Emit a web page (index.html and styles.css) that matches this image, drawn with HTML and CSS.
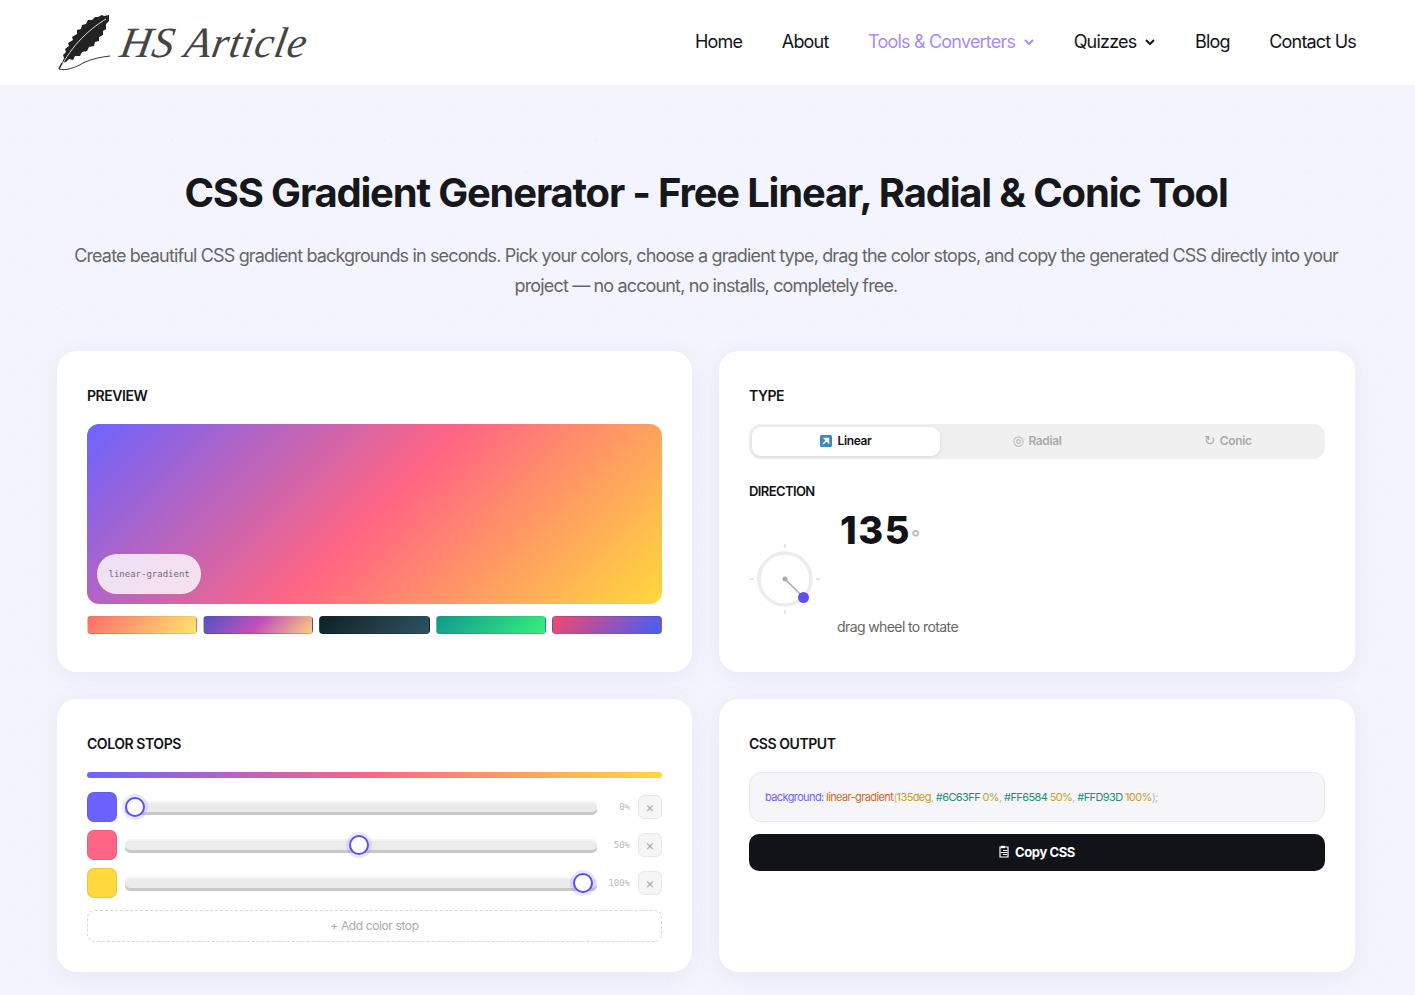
FILE: index.html
```html
<!DOCTYPE html>
<html lang="en">

<head>
  <meta charset="UTF-8">
  <meta name="viewport" content="width=device-width, initial-scale=1">
  <title>CSS Gradient Generator - Free Linear, Radial &amp; Conic Tool</title>
  <link rel="stylesheet" href="styles.css">
</head>

<body>
<header class="site-header">
  <a class="logo" href="#">
    <svg class="logo-mark" width="56" height="60" viewBox="0 0 56 60">
      <path d="M52 2 L47 3 L45 2 L41 4 L38 4 L35 7 L31 7 L29 11 L25 12 L24 16 L20 17 L20 21 L15 24 L16 27 L11 30 L12 33 L8 36 L9 39 L6 42 L7 45 L5 50 L9 49 L12 46 L16 47 L18 43 L23 43 L25 39 L30 38 L32 34 L37 33 L38 29 L42 28 L42 24 L46 22 L46 18 L49 16 L49 11 L52 8 Z" fill="#222"/>
      <path d="M49 6 C36 14 18 28 5 52" fill="none" stroke="#ddd" stroke-width="1"/>
      <path d="M5 50 L2 56" fill="none" stroke="#222" stroke-width="1.6"/>
      <path d="M2 56 C8 58 18 55 26 50 C34 46 44 44 53 43" fill="none" stroke="#333" stroke-width="1"/>
    </svg>
    <span class="logo-text">HS Article</span>
  </a>
  <nav class="main-nav">
    <a href="#">Home</a>
    <a href="#">About</a>
    <a href="#" class="current">Tools &amp; Converters
      <svg class="chevron" width="10" height="6" viewBox="0 0 10 6"><path d="M1 1l4 4 4-4" fill="none" stroke="currentColor" stroke-width="2"/></svg>
    </a>
    <a href="#">Quizzes
      <svg class="chevron" width="10" height="6" viewBox="0 0 10 6"><path d="M1 1l4 4 4-4" fill="none" stroke="currentColor" stroke-width="2"/></svg>
    </a>
    <a href="#">Blog</a>
    <a href="#">Contact Us</a>
  </nav>
</header>

<main class="page">
  <section class="intro">
    <h1>CSS Gradient Generator - Free Linear, Radial &amp; Conic Tool</h1>
    <p>Create beautiful CSS gradient backgrounds in seconds. Pick your colors, choose a gradient type, drag the color stops, and copy the generated CSS directly into your project — no account, no installs, completely free.</p>
  </section>

  <div class="tool-grid">
    <section class="card">
      <h2 class="card-label">PREVIEW</h2>
      <div class="preview">
        <span class="preview-pill">linear-gradient</span>
      </div>
      <div class="presets">
        <span class="preset preset-1"></span>
        <span class="preset preset-2"></span>
        <span class="preset preset-3"></span>
        <span class="preset preset-4"></span>
        <span class="preset preset-5"></span>
      </div>
    </section>

    <section class="card">
      <h2 class="card-label">TYPE</h2>
      <div class="tabs">
        <button class="tab active">
          <svg width="12" height="12" viewBox="0 0 12 12"><rect width="12" height="12" rx="1.5" fill="#3b88c3"/><path d="M3 9l4-4M4.5 3.5H8.5V7.5z" stroke="#fff" stroke-width="1.4" fill="#fff"/></svg>
          Linear
        </button>
        <button class="tab"><span class="tab-glyph">◎</span> Radial</button>
        <button class="tab"><span class="tab-glyph">↻</span> Conic</button>
      </div>
      <h2 class="card-label direction-label">DIRECTION</h2>
      <div class="direction">
        <svg class="dial" width="72" height="72" viewBox="0 0 72 72">
          <circle cx="36" cy="36" r="26" fill="#fff" stroke="#ececec" stroke-width="3.500"/>
          <g stroke="#ddd" stroke-width="1.500">
            <path d="M36 1v4M36 67v4M1 36h4M67 36h4"/>
          </g>
          <g stroke="#eee" stroke-width="1">
            <path d="M11 11l1 1M60 11l1 1M11 61l1-1M60 60l1 1"/>
          </g>
          <line x1="36" y1="36" x2="54" y2="54" stroke="#aaa" stroke-width="1.500"/>
          <circle cx="36" cy="36" r="2.500" fill="#aaa"/>
          <circle cx="54.500" cy="54.500" r="5.500" fill="#5b50f5"/>
        </svg>
        <div class="direction-info">
          <div class="angle">135<span class="degree">°</span></div>
          <p class="hint">drag wheel to rotate</p>
        </div>
      </div>
    </section>

    <section class="card">
      <h2 class="card-label">COLOR STOPS</h2>
      <div class="stops-bar"></div>
      <div class="stop-list">
        <div class="stop">
          <span class="stop-color color-a"></span>
          <input class="stop-range" type="range" min="0" max="100" value="0">
          <span class="stop-pct">0%</span>
          <button class="stop-remove">×</button>
        </div>
        <div class="stop">
          <span class="stop-color color-b"></span>
          <input class="stop-range" type="range" min="0" max="100" value="50">
          <span class="stop-pct">50%</span>
          <button class="stop-remove">×</button>
        </div>
        <div class="stop">
          <span class="stop-color color-c"></span>
          <input class="stop-range" type="range" min="0" max="100" value="100">
          <span class="stop-pct">100%</span>
          <button class="stop-remove">×</button>
        </div>
      </div>
      <button class="add-stop">+ Add color stop</button>
    </section>

    <section class="card">
      <h2 class="card-label">CSS OUTPUT</h2>
      <div class="css-output"><span class="c-prop">background:</span> <span class="c-fn">linear-gradient</span><span class="c-punc">(</span><span class="c-num">135deg</span><span class="c-punc">,</span> <span class="c-hex">#6C63FF</span> <span class="c-num">0%</span><span class="c-punc">,</span> <span class="c-hex">#FF6584</span> <span class="c-num">50%</span><span class="c-punc">,</span> <span class="c-hex">#FFD93D</span> <span class="c-num">100%</span><span class="c-punc">);</span></div>
      <button class="copy-btn">
        <svg width="10" height="13" viewBox="0 0 10 13"><path d="M1 2h8v10H1z" fill="none" stroke="#fff" stroke-width="1.200"/><path d="M2 .8h4v2.400H2z" fill="#fff"/><path d="M4 5.500h4M2 7.500h6M4 9.500h4" stroke="#fff" stroke-width="1"/></svg>
        Copy CSS
      </button>
    </section>
  </div>
</main>
</body>

</html>
```

FILE: styles.css
```css
* {
    box-sizing: border-box;
}

body {
    margin: 0;
    background-color: #f4f4fe;
    /* faint speckle over the page */
    background-image:
        radial-gradient(circle at 13px 21px, #eeeff9 0.6px, transparent 1.1px),
        radial-gradient(circle at 21px 7px, #eff0fa 0.6px, transparent 1.1px),
        radial-gradient(circle at 29px 17px, #eeeff9 0.6px, transparent 1.1px),
        radial-gradient(circle at 5px 37px, #eff0fa 0.6px, transparent 1.1px);
    background-size: 53px 59px, 37px 43px, 71px 31px, 29px 67px;
    color: #111318;
    font-family: Inter, "Liberation Sans", sans-serif;
}

a {
    color: inherit;
    text-decoration: none;
}

button {
    font-family: inherit;
    cursor: pointer;
}

/* header */
.site-header {
    display: flex;
    align-items: center;
    justify-content: space-between;
    height: 85px;
    padding: 0 59px 0 57px;
    background-color: #fff;
}

.logo {
    display: flex;
    align-items: center;
    gap: 8px;
}

.logo-text {
    font-family: "Liberation Serif", serif;
    font-style: italic;
    font-size: 43px;
    letter-spacing: 0.7px;
    color: #444;
    white-space: nowrap;
    transform: skewX(-10deg);
}

.main-nav {
    display: flex;
    align-items: center;
    gap: 39.500px;
    padding-bottom: 2px;
    font-size: 18px;
    letter-spacing: -0.8px;
}

.main-nav a {
    display: flex;
    align-items: center;
    gap: 9px;
}

.main-nav .current {
    color: #a78bfa;
}

/* intro */
.page {
    padding: 0 60px 23px 57px;
}

.intro {
    padding-top: 83px;
    text-align: center;
}

.intro h1 {
    margin: 0;
    font-size: 40px;
    line-height: 50px;
    font-weight: 700;
    letter-spacing: -1.2px;
    color: #16171b;
}

.intro p {
    margin: 23px 0 50px;
    font-size: 18px;
    line-height: 30px;
    letter-spacing: -0.85px;
    color: #666;
}

/* cards */
.tool-grid {
    display: grid;
    grid-template-columns: 635px 636px;
    grid-template-rows: 321px 273px;
    gap: 27px;
}

.card {
    padding: 36px 30px 0;
    background-color: #fff;
    border-radius: 20px;
    box-shadow: 0 4px 24px rgba(90, 90, 150, 0.08);
}

.card-label {
    margin: 0 0 20px;
    font-size: 14px;
    line-height: 17px;
    font-weight: 600;
    letter-spacing: -0.45px;
}

/* preview */
.preview {
    position: relative;
    height: 180px;
    border-radius: 12px;
    background: linear-gradient(135deg, #6c63ff 0%, #ff6584 50%, #ffd93d 100%);
}

.preview-pill {
    position: absolute;
    left: 10px;
    bottom: 10px;
    padding: 0 10.500px;
    height: 40px;
    line-height: 38px;
    border: 1px solid rgba(255, 255, 255, 0.2);
    border-radius: 20px;
    background-color: rgba(255, 255, 255, 0.8);
    font-family: "DejaVu Sans Mono", monospace;
    font-size: 9px;
    color: #6e6e7e;
}

.presets {
    display: flex;
    gap: 6px;
    margin-top: 12px;
}

.preset {
    flex: 1;
    height: 18px;
    border: 1px solid rgba(0, 0, 0, 0.08);
    border-radius: 4px;
}

.preset-1 { background: linear-gradient(135deg, #ff6b6b, #ffe66d); }
.preset-2 { background: linear-gradient(135deg, #4e54c8, #c44fbb 50%, #fbd07c); }
.preset-3 { background: linear-gradient(135deg, #0f2027, #203a43, #2c5364); }
.preset-4 { background: linear-gradient(135deg, #11998e, #38ef7d); }
.preset-5 { background: linear-gradient(135deg, #f5476b, #4060f8); }

/* type tabs */
.tabs {
    display: flex;
    gap: 3px;
    height: 35px;
    padding: 3px;
    border-radius: 12px;
    background-color: #f0f0f0;
}

.tab {
    flex: 1;
    display: flex;
    align-items: center;
    justify-content: center;
    gap: 5px;
    padding: 0 0 2px;
    border: 0;
    border-radius: 9px;
    background: none;
    font-size: 12px;
    font-weight: 600;
    letter-spacing: -0.35px;
    color: #aaa;
}

.tab svg {
    margin-top: 1px;
}

.tab.active {
    background-color: #fff;
    color: #111318;
    box-shadow: 0 1px 4px rgba(0, 0, 0, 0.1);
}

.tab-glyph {
    font-size: 13px;
    font-weight: 400;
    font-family: "DejaVu Sans", sans-serif;
}

.direction-label {
    margin: 24px 0 5px;
    font-size: 13px;
    letter-spacing: -0.6px;
}

.direction {
    display: flex;
    align-items: center;
    gap: 16px;
}

.dial {
    flex: none;
    margin-top: 18px;
}

.direction-info {
    display: flex;
    flex-direction: column;
    justify-content: space-between;
    height: 130px;
}

.angle {
    display: flex;
    align-items: center;
    padding-left: 3px;
    font-size: 38px;
    line-height: 50px;
    font-weight: 800;
    letter-spacing: 1.500px;
}

.degree {
    margin-top: 16px;
    font-size: 20px;
    font-weight: 500;
    line-height: 20px;
    letter-spacing: 0;
    color: #bbb;
}

.hint {
    margin: 0;
    font-size: 14px;
    line-height: 17px;
    letter-spacing: -0.6px;
    color: #666;
}

/* color stops */
.stops-bar {
    height: 6px;
    border-radius: 3px;
    background: linear-gradient(90deg, #6c63ff, #ff6584, #ffd93d);
}

.stop-list {
    display: flex;
    flex-direction: column;
    gap: 8px;
    margin-top: 14px;
}

.stop {
    display: flex;
    align-items: center;
    gap: 8px;
}

.stop-color {
    flex: none;
    width: 30px;
    height: 30px;
    border-radius: 7px;
    border: 1px solid rgba(0, 0, 0, 0.08);
}

.color-a { background-color: #6c63ff; }
.color-b { background-color: #ff6584; }
.color-c { background-color: #ffd93d; }

.stop-range {
    -webkit-appearance: none;
    appearance: none;
    flex: 1;
    min-width: 0;
    height: 10px;
    margin: 0;
    padding-right: 4px;
    border-radius: 5px;
    background-color: #ebebeb;
    box-shadow: 0 3px 0 #c8c8c8, 0 -1px 0 #f5f5f5, inset 0 1px 0 #f5f5f5;
}

.stop-range::-webkit-slider-thumb {
    -webkit-appearance: none;
    appearance: none;
    width: 20px;
    height: 20px;
    border: 2px solid #5a50f0;
    border-radius: 50%;
    background-color: #fff;
    box-shadow: 0 0 0 3px rgba(108, 99, 255, 0.15);
}

.stop-pct {
    flex: none;
    width: 25px;
    text-align: right;
    font-family: "DejaVu Sans Mono", monospace;
    font-size: 9px;
    color: #bbb;
}

.stop-remove {
    flex: none;
    width: 24px;
    height: 24px;
    padding: 0;
    border: 1px solid #e8e8e8;
    border-radius: 6px;
    background-color: #f5f5f5;
    font-size: 14px;
    line-height: 22px;
    color: #aaa;
}

.add-stop {
    display: block;
    width: 100%;
    height: 32px;
    margin-top: 12px;
    padding: 0 0 2px;
    border: 1px dashed #d8d8d8;
    border-radius: 8px;
    background: none;
    font-size: 12px;
    letter-spacing: -0.38px;
    color: #aaa;
}

/* css output */
.css-output {
    height: 50px;
    padding: 0 15px;
    border: 1px solid #e8e8ee;
    border-radius: 12px;
    background-color: #f5f5fa;
    font-size: 11px;
    line-height: 48px;
    letter-spacing: -0.61px;
    white-space: nowrap;
}

.c-prop { color: #6c63ff; }
.c-fn { color: #d2691e; }
.c-num { color: #c8a020; }
.c-hex { color: #1f8f6f; }
.c-punc { color: #bbb; }

.copy-btn {
    display: flex;
    align-items: center;
    justify-content: center;
    gap: 6px;
    width: 100%;
    height: 37px;
    margin-top: 12px;
    padding: 0 0 2px;
    border: 0;
    border-radius: 10px;
    background-color: #111318;
    font-size: 13px;
    font-weight: 700;
    letter-spacing: -0.4px;
    color: #fff;
}
```
